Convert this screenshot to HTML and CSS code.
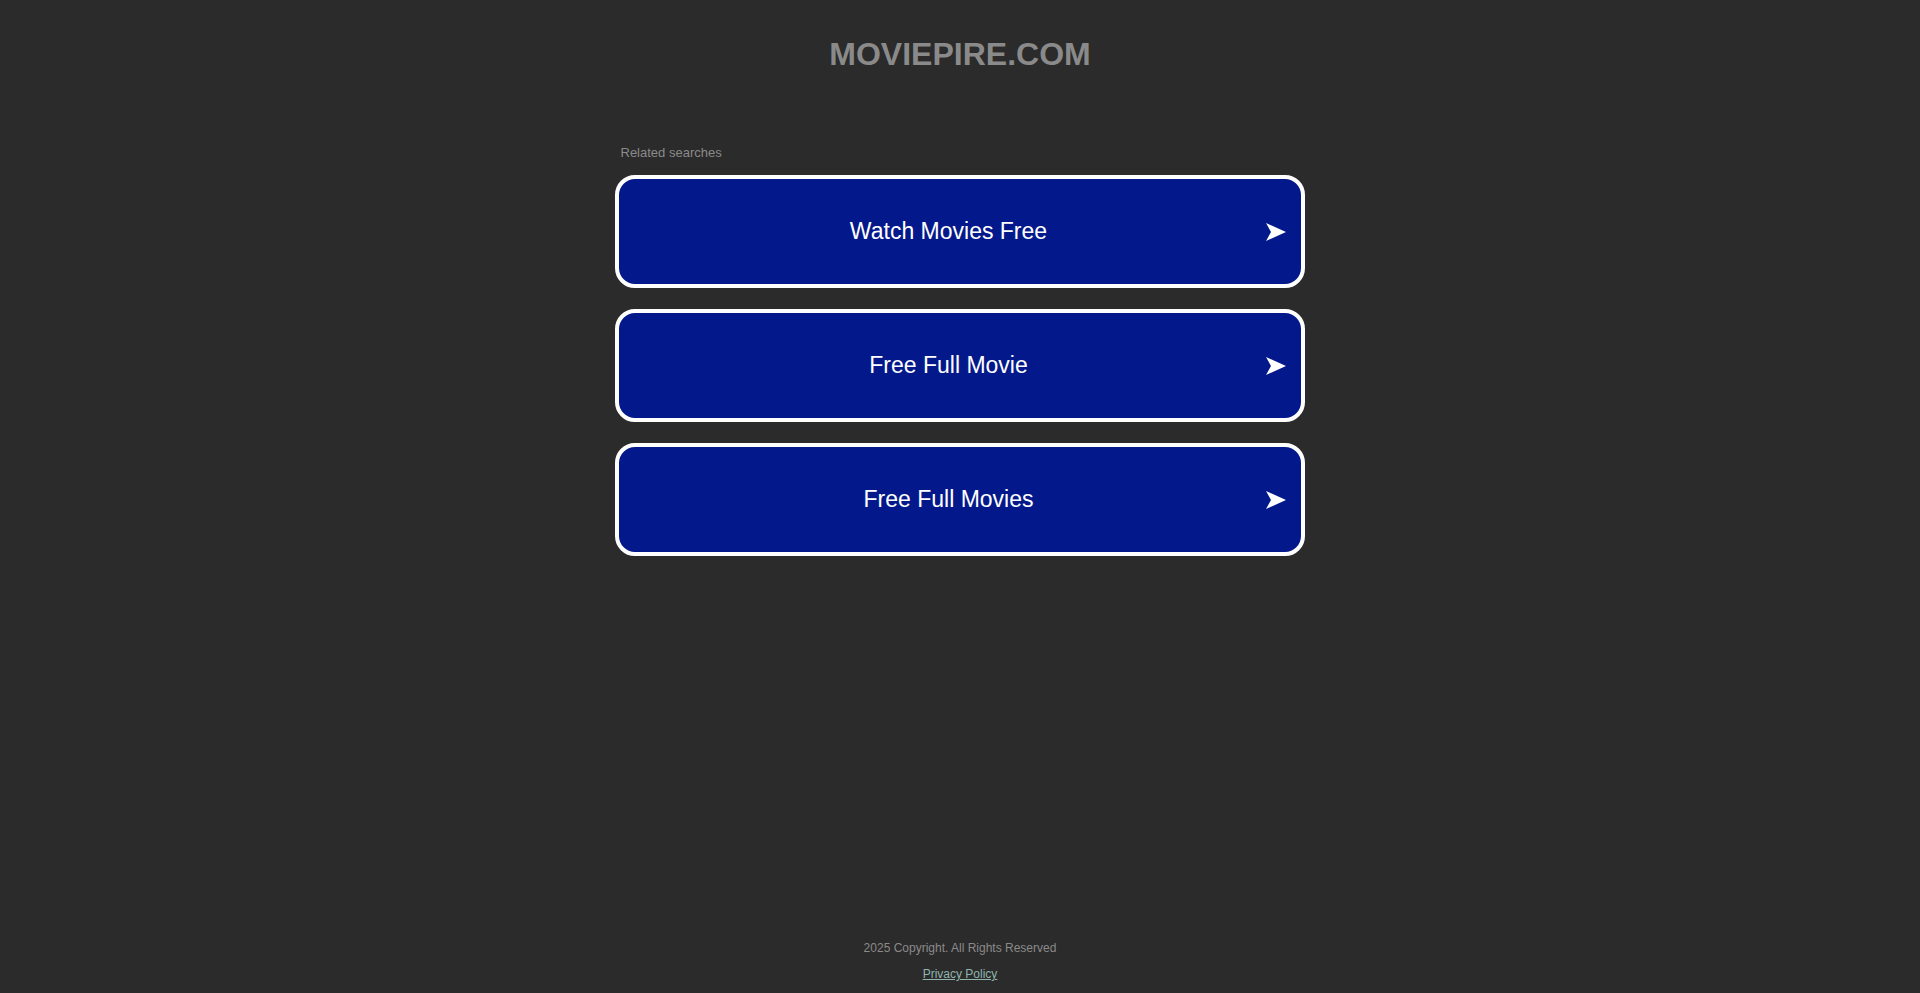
FILE: index.html
```html
<!DOCTYPE html>
<html lang="en">
<head>
<meta charset="utf-8">
<title>moviepire.com</title>
<link rel="stylesheet" href="styles.css">
</head>
<body>
<div class="page">
  <header class="header">
    <h1 class="domain">MOVIEPIRE.COM</h1>
  </header>
  <main class="main">
    <div class="related">
      <p class="related-title">Related searches</p>
      <div class="links">
        <a class="link" href="#"><span class="link-text">Watch Movies Free</span><svg class="arrow" viewBox="0 0 20 18" width="20" height="18"><path d="M0 0 L20 9 L0 18 L5 9 Z" fill="#fff"/></svg></a>
        <a class="link" href="#"><span class="link-text">Free Full Movie</span><svg class="arrow" viewBox="0 0 20 18" width="20" height="18"><path d="M0 0 L20 9 L0 18 L5 9 Z" fill="#fff"/></svg></a>
        <a class="link" href="#"><span class="link-text">Free Full Movies</span><svg class="arrow" viewBox="0 0 20 18" width="20" height="18"><path d="M0 0 L20 9 L0 18 L5 9 Z" fill="#fff"/></svg></a>
      </div>
    </div>
  </main>
  <footer class="footer">
    <p class="copyright">2025 Copyright. All Rights Reserved</p>
    <a class="privacy" href="#">Privacy Policy</a>
  </footer>
</div>
</body>
</html>
```
FILE: styles.css
```css
html, body {
  margin: 0;
  padding: 0;
  background: #2b2b2b;
  font-family: "Liberation Sans", Arial, sans-serif;
}
.page {
  min-height: 100vh;
  display: flex;
  flex-direction: column;
  box-sizing: border-box;
}
.header {
  padding-top: 36px;
  text-align: center;
}
.domain {
  margin: 0;
  font-size: 32px;
  line-height: 37px;
  font-weight: bold;
  color: #8a8a8a;
}
.main {
  display: flex;
  justify-content: center;
  padding-top: 72px;
}
.related {
  width: 690px;
  margin-left: -1px;
}
.related-title {
  margin: 0 0 15px 6px;
  font-size: 13px;
  line-height: 15px;
  color: #8a8a8a;
}
.links {
  display: flex;
  flex-direction: column;
  gap: 21px;
}
.link {
  position: relative;
  display: flex;
  align-items: center;
  justify-content: center;
  height: 113px;
  box-sizing: border-box;
  border: 4px solid #ffffff;
  border-radius: 20px;
  background: #03198b;
  padding: 0 42px 0 20px;
  color: #ffffff;
  text-decoration: none;
}
.link-text {
  font-size: 23px;
  line-height: 27px;
}
.arrow {
  position: absolute;
  right: 15px;
  top: 50%;
  margin-top: -9px;
}
.footer {
  margin-top: auto;
  display: flex;
  flex-direction: column;
  align-items: center;
  padding-bottom: 12px;
}
.copyright {
  margin: 0 0 12px;
  font-size: 12px;
  line-height: 14px;
  color: #8a8a8a;
}
.privacy {
  font-size: 12px;
  line-height: 14px;
  color: #8fb5ad;
  text-decoration: underline;
}
```
